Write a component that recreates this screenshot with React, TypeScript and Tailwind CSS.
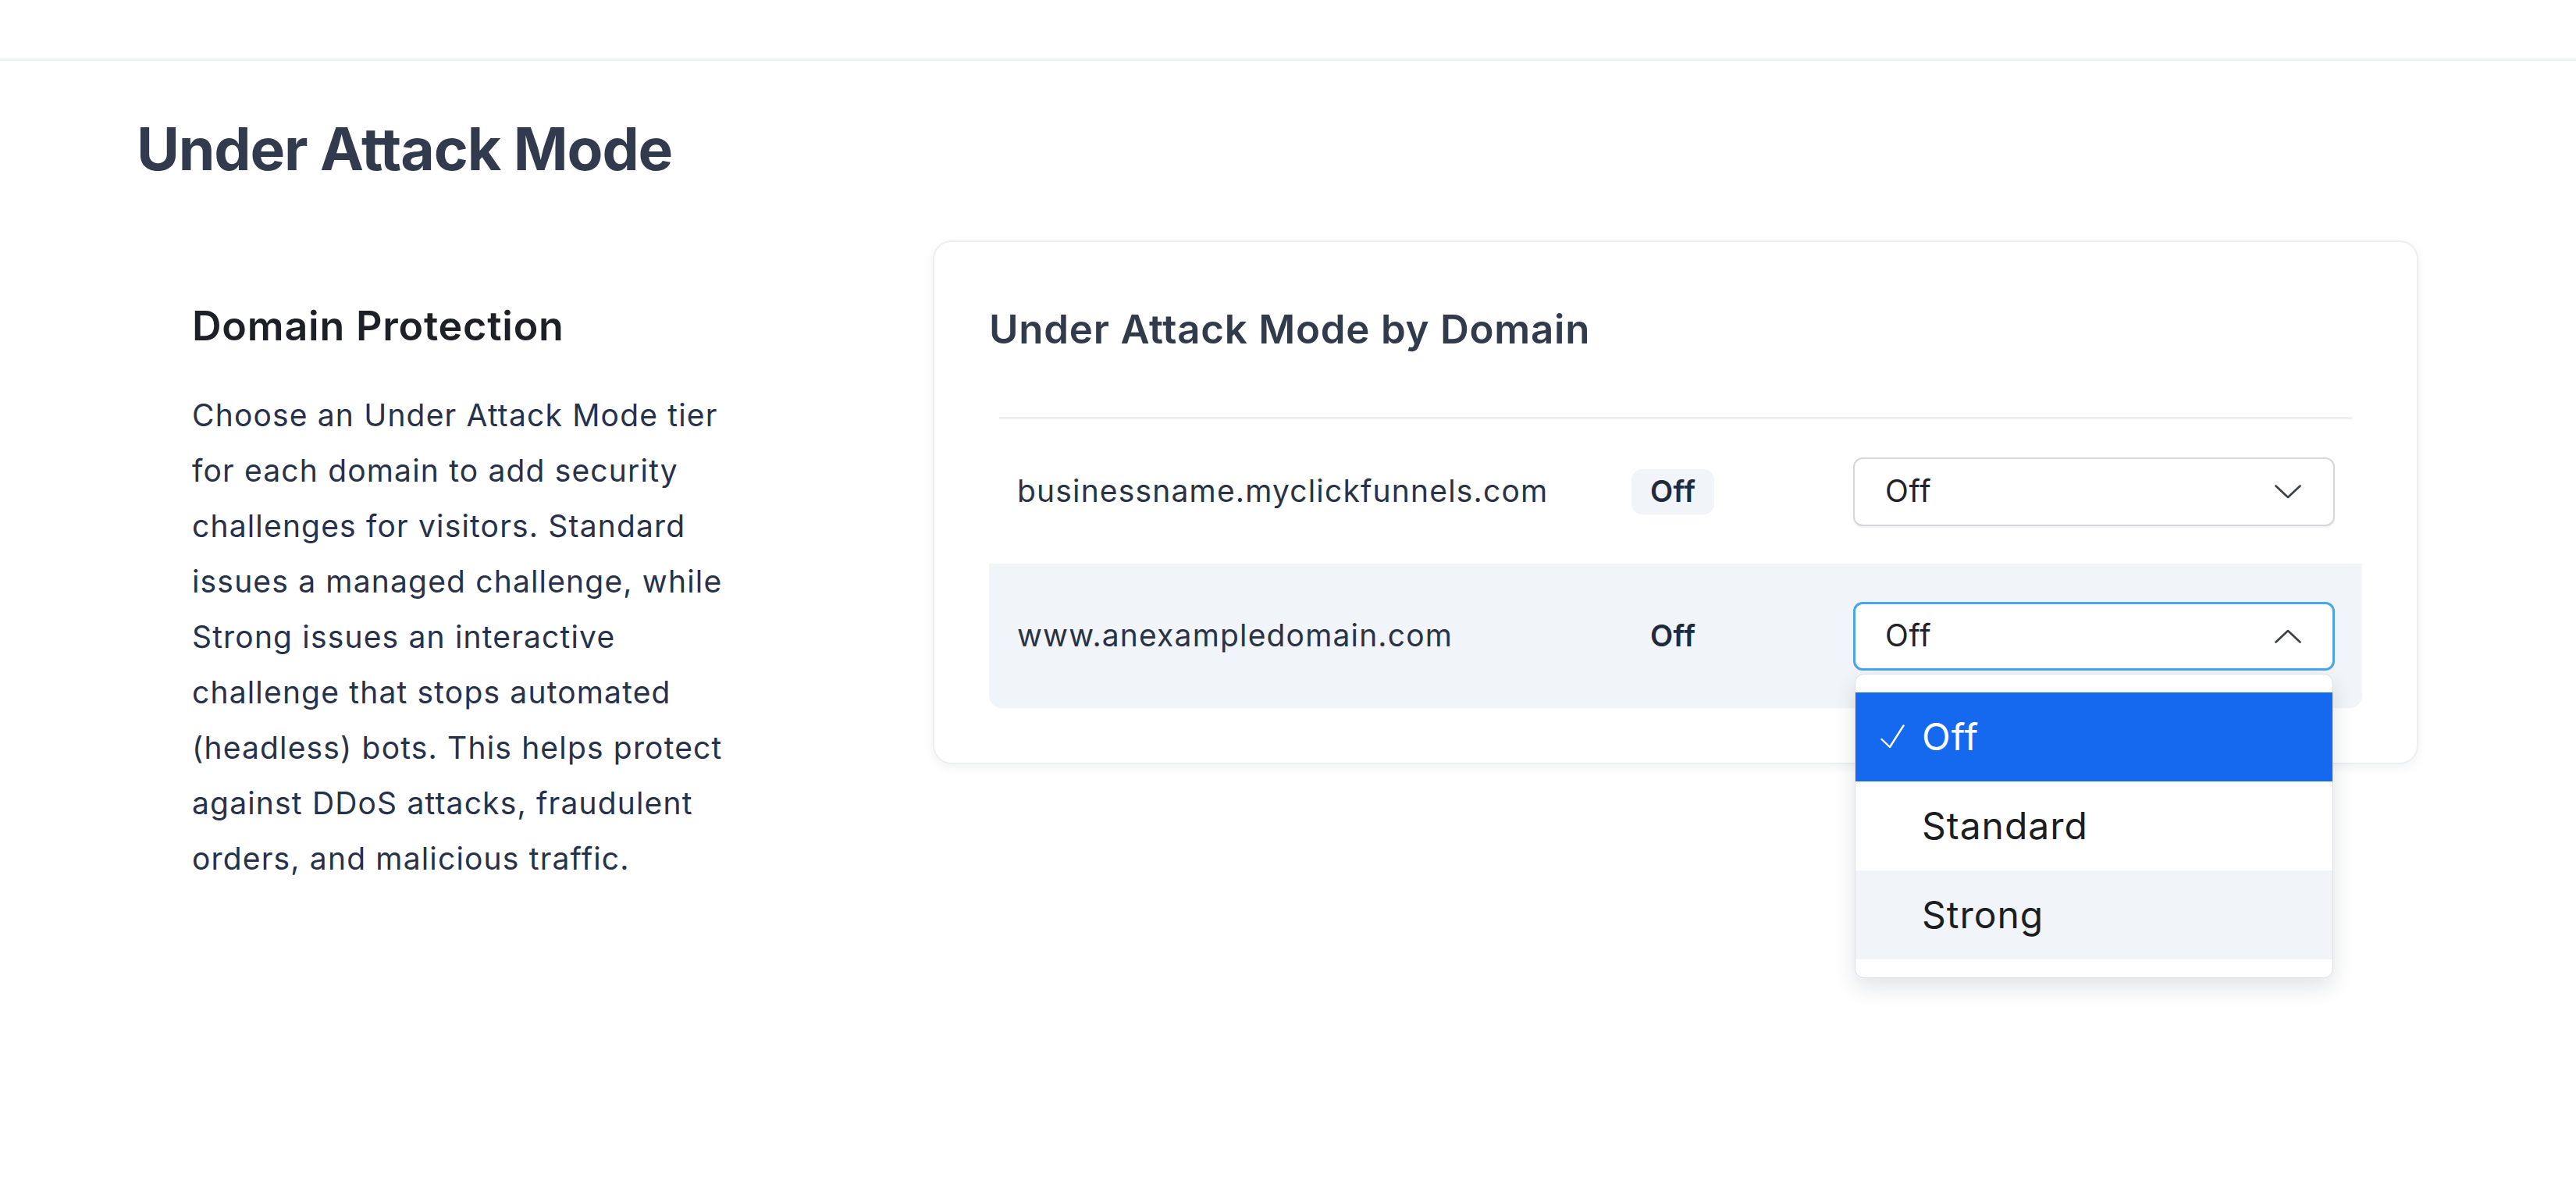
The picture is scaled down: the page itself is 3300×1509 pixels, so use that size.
import { JSX } from 'react'

type Domain = {
  name: string
  status: string
  open?: boolean
}

const DOMAINS: Domain[] = [
  { name: 'businessname.myclickfunnels.com', status: 'Off' },
  { name: 'www.anexampledomain.com', status: 'Off', open: true }
]

const OPTIONS = ['Off', 'Standard', 'Strong']

function Chevron({ up }: { up?: boolean }): JSX.Element {
  return (
    <svg width="34" height="18" viewBox="0 0 34 18" fill="none" className="shrink-0">
      <path
        d={up ? 'M1.5 16.5 L17 2 L32.5 16.5' : 'M1.5 1.5 L17 16 L32.5 1.5'}
        stroke="#3b3f46"
        strokeWidth="2.6"
        strokeLinecap="round"
        strokeLinejoin="round"
      />
    </svg>
  )
}

function CheckMark(): JSX.Element {
  return (
    <svg width="31" height="31" viewBox="0 0 31 31" fill="none" className="shrink-0">
      <path d="M1.5 19 L12 29 L29.5 1.5" stroke="white" strokeWidth="2.4" strokeLinecap="round" strokeLinejoin="round" />
    </svg>
  )
}

function TierSelect({ value, open }: { value: string; open?: boolean }): JSX.Element {
  return (
    <div className="relative">
      <div
        className={
          open
            ? 'flex h-[88px] items-center justify-between rounded-[12px] border-[3px] border-[#4aa4ef] bg-white pl-[38px] pr-[40px]'
            : 'flex h-[88px] items-center justify-between rounded-[12px] border-2 border-[#d5d7db] bg-white pl-[39px] pr-[41px] shadow-[0_2px_2px_rgba(0,0,0,0.06)]'
        }
      >
        <span className="text-[39px] tracking-[0.02em] text-[#1f2328]">{value}</span>
        <Chevron up={open} />
      </div>

      {open && (
        <div className="absolute left-[2px] right-[2px] top-[calc(100%+4px)] z-10 rounded-[12px] border border-[#dcdee2] bg-white py-[23px] shadow-[0_12px_28px_rgba(20,30,50,0.12)]">
          {OPTIONS.map((option) => (
            <div
              key={option}
              className={
                option === value
                  ? 'flex h-[114px] items-center gap-[22px] bg-[#1469ef] pl-[32px] text-white'
                  : option === 'Strong'
                    ? 'flex h-[114px] items-center gap-[22px] bg-[#f1f4f8] pl-[32px] text-[#1c1e22]'
                    : 'flex h-[114px] items-center gap-[22px] pl-[32px] text-[#1c1e22]'
              }
            >
              <span className="w-[31px]">{option === value && <CheckMark />}</span>
              <span className="text-[48px] tracking-[0.02em]">{option}</span>
            </div>
          ))}
        </div>
      )}
    </div>
  )
}

export default function App(): JSX.Element {
  return (
    <div className="min-h-screen bg-white font-['Inter',sans-serif]">
      <div className="h-[78px] border-b-[3px] border-[#eff1f3]" />

      <main className="pl-[175px] pt-[68px]">
        <h1 className="text-[75px] font-bold leading-[90px] tracking-[-0.015em] text-[#323b4d]">Under Attack Mode</h1>

        <div className="mt-[72px] flex items-start">
          <section className="ml-[71px] w-[705px] pt-[78px]">
            <h2 className="text-[52px] font-semibold leading-[64px] tracking-[0.015em] text-[#1d2026]">
              Domain Protection
            </h2>
            <p className="mt-[46px] text-[39px] leading-[71px] tracking-[0.03em] text-[#27324a]">
              Choose an Under Attack Mode tier for each domain to add security challenges for visitors. Standard
              issues a managed challenge, while Strong issues an interactive challenge that stops automated (headless)
              bots. This helps protect against DDoS attacks, fraudulent orders, and malicious traffic.
            </p>
          </section>

          <div className="ml-[244px] w-[1903px] rounded-[24px] border-2 border-[#eceef1] bg-white px-[70px] pb-[70px] pt-[80px] shadow-[0_4px_14px_rgba(20,30,50,0.06)]">
            <h3 className="text-[51px] font-semibold leading-[64px] tracking-[0.015em] text-[#323b4c]">
              Under Attack Mode by Domain
            </h3>

            <div className="mx-[13px] mt-[80px] h-[3px] bg-[#eef0f3]" />

            <div>
              {DOMAINS.map((domain) => (
                <div
                  key={domain.name}
                  className={
                    domain.open
                      ? 'grid h-[185px] grid-cols-[787px_284px_617px] items-center rounded-b-[16px] bg-[#f1f4f8] pl-[36px] pr-[35px]'
                      : 'grid h-[185px] grid-cols-[787px_284px_617px] items-center pl-[36px] pr-[35px]'
                  }
                >
                  <span className="text-[39px] tracking-[0.03em] text-[#2a3343]">{domain.name}</span>
                  <span>
                    <span className="inline-flex h-[58px] items-center rounded-[14px] bg-[#f1f4f8] px-[24px] text-[38px] font-semibold tracking-[0.01em] text-[#1f2a3c]">
                      {domain.status}
                    </span>
                  </span>
                  <TierSelect value={domain.status} open={domain.open} />
                </div>
              ))}
            </div>
          </div>
        </div>
      </main>
    </div>
  )
}
